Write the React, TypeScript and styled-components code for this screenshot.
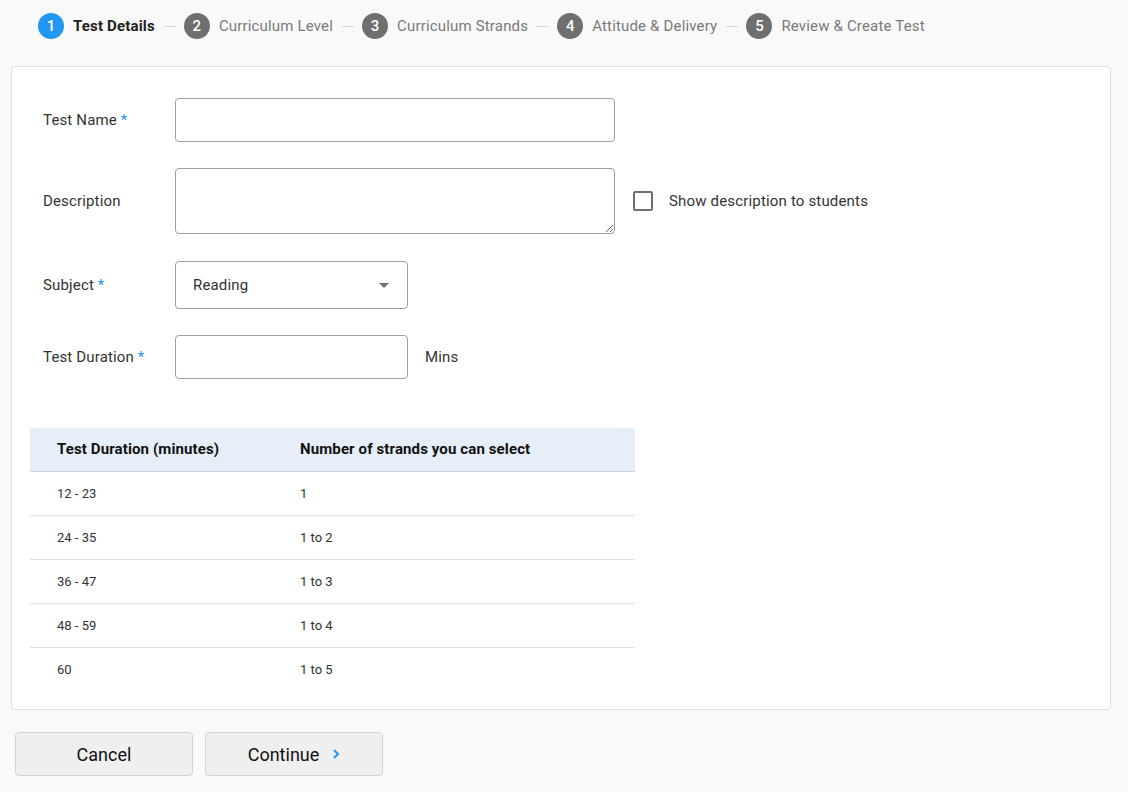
import React from "react";
import styled, { createGlobalStyle } from "styled-components";

const GlobalStyle = createGlobalStyle`
  html, body {
    margin: 0;
    padding: 0;
    background: #f9f9f9;
    font-family: Roboto, "Liberation Sans", sans-serif;
  }
  * { box-sizing: border-box; }
`;

const Page = styled.div`
  width: 1128px;
  min-height: 792px;
  padding: 0 17px 16px 11px;
`;

const Stepper = styled.nav`
  display: flex;
  align-items: center;
  height: 66px;
  padding: 0 0 14px 27px;
`;

const Step = styled.div`
  display: flex;
  align-items: center;
  gap: 9px;
`;

const StepCircle = styled.span<{ $active?: boolean }>`
  width: 26px;
  height: 26px;
  border-radius: 50%;
  background: ${(p) => (p.$active ? "#2196f3" : "#6f6f6f")};
  color: #fff;
  font-size: 15px;
  font-weight: 500;
  display: flex;
  align-items: center;
  justify-content: center;
`;

const StepLabel = styled.span<{ $active?: boolean }>`
  font-size: 15px;
  letter-spacing: 0.17px;
  font-weight: ${(p) => (p.$active ? 700 : 400)};
  color: ${(p) => (p.$active ? "#212121" : "#7a7a7a")};
`;

const StepLine = styled.span`
  width: 12px;
  height: 1px;
  background: #d6d6d6;
  margin: 0 8px 0 9px;
`;

const Card = styled.section`
  background: #fff;
  border: 1px solid #e0e0e0;
  border-radius: 4px;
  padding: 31px 0 17px 0;
`;

const Form = styled.div`
  display: flex;
  flex-direction: column;
  gap: 26px;
  padding-left: 31px;
`;

const Row = styled.div<{ $mt?: number }>`
  display: flex;
  align-items: center;
  margin-top: ${(p) => p.$mt ?? 0}px;
`;

const Label = styled.label`
  width: 132px;
  font-size: 15px;
  letter-spacing: 0.15px;
  color: #333;
`;

const Req = styled.span`
  color: #2196f3;
`;

const TextInput = styled.input<{ $w: number }>`
  width: ${(p) => p.$w}px;
  height: 44px;
  border: 1px solid #9e9e9e;
  border-radius: 4px;
  padding: 0 16px;
  font: inherit;
  font-size: 15px;
  outline: none;
`;

const TextArea = styled.textarea`
  width: 440px;
  height: 66px;
  border: 1px solid #9e9e9e;
  border-radius: 4px;
  padding: 10px 16px;
  font: inherit;
  font-size: 15px;
  outline: none;
  display: block;
`;

const CheckWrap = styled.label`
  display: flex;
  align-items: center;
  gap: 16px;
  margin-left: 18px;
  font-size: 15px;
  letter-spacing: 0.17px;
  color: #333;
`;

const CheckBox = styled.span`
  width: 20px;
  height: 20px;
  border: 2px solid #6f6f6f;
  border-radius: 2px;
`;

const Select = styled.div`
  width: 233px;
  height: 48px;
  border: 1px solid #9e9e9e;
  border-radius: 4px;
  padding: 0 17px 0 17px;
  display: flex;
  align-items: center;
  justify-content: space-between;
  font-size: 15px;
  letter-spacing: 0.15px;
  color: #333;
`;

const Caret = styled.span`
  width: 0;
  height: 0;
  border-left: 5px solid transparent;
  border-right: 5px solid transparent;
  border-top: 5px solid #707070;
  margin-right: 1px;
`;

const Unit = styled.span`
  margin-left: 17px;
  font-size: 15px;
  letter-spacing: 0.15px;
  color: #333;
`;

const Table = styled.table`
  width: 605px;
  margin: 49px 0 0 18px;
  border-collapse: collapse;
`;

const Th = styled.th<{ $w?: number }>`
  ${(p) => (p.$w ? `width: ${p.$w}px;` : "")}
  height: 43px;
  background: #e6eef8;
  border-bottom: 1px solid #cfd4da;
  text-align: left;
  padding: 0 0 0 27px;
  font-size: 15px;
  letter-spacing: 0.12px;
  font-weight: 700;
  color: #111;
`;

const Td = styled.td`
  height: 44px;
  padding: 0 0 0 27px;
  font-size: 13px;
  color: #333;
  border-bottom: 1px solid #e0e0e0;
  tr:last-child & {
    border-bottom: none;
    height: 45px;
  }
`;

const Actions = styled.div`
  display: flex;
  gap: 12px;
  margin: 22px 0 0 4px;
`;

const Button = styled.button`
  width: 178px;
  height: 44px;
  background: #efefef;
  border: 1px solid #d3d3d3;
  border-radius: 4px;
  font: inherit;
  font-size: 18px;
  color: #111;
  display: flex;
  align-items: center;
  justify-content: center;
  gap: 13px;
  cursor: pointer;
`;

const steps = [
  "Test Details",
  "Curriculum Level",
  "Curriculum Strands",
  "Attitude & Delivery",
  "Review & Create Test",
];

const rows = [
  ["12 - 23", "1"],
  ["24 - 35", "1 to 2"],
  ["36 - 47", "1 to 3"],
  ["48 - 59", "1 to 4"],
  ["60", "1 to 5"],
];

const App = () => {
  return (
    <Page>
      <GlobalStyle />
      <Stepper>
        {steps.map((s, i) => (
          <React.Fragment key={s}>
            {i > 0 && <StepLine />}
            <Step>
              <StepCircle $active={i === 0}>{i + 1}</StepCircle>
              <StepLabel $active={i === 0}>{s}</StepLabel>
            </Step>
          </React.Fragment>
        ))}
      </Stepper>
      <Card>
        <Form>
          <Row>
            <Label>
              Test Name <Req>*</Req>
            </Label>
            <TextInput $w={440} />
          </Row>
          <Row>
            <Label>Description</Label>
            <TextArea />
            <CheckWrap>
              <CheckBox />
              Show description to students
            </CheckWrap>
          </Row>
          <Row $mt={1}>
            <Label>
              Subject <Req>*</Req>
            </Label>
            <Select>
              Reading
              <Caret />
            </Select>
          </Row>
          <Row>
            <Label>
              Test Duration <Req>*</Req>
            </Label>
            <TextInput $w={233} />
            <Unit>Mins</Unit>
          </Row>
        </Form>
        <Table>
          <thead>
            <tr>
              <Th $w={243}>Test Duration (minutes)</Th>
              <Th>Number of strands you can select</Th>
            </tr>
          </thead>
          <tbody>
            {rows.map(([a, b]) => (
              <tr key={a}>
                <Td>{a}</Td>
                <Td>{b}</Td>
              </tr>
            ))}
          </tbody>
        </Table>
      </Card>
      <Actions>
        <Button>Cancel</Button>
        <Button>
          Continue
          <svg width="8" height="12" viewBox="0 0 8 12">
            <path d="M2 2l4 4-4 4" fill="none" stroke="#2196f3" strokeWidth="2" />
          </svg>
        </Button>
      </Actions>
    </Page>
  );
};

export default App;
